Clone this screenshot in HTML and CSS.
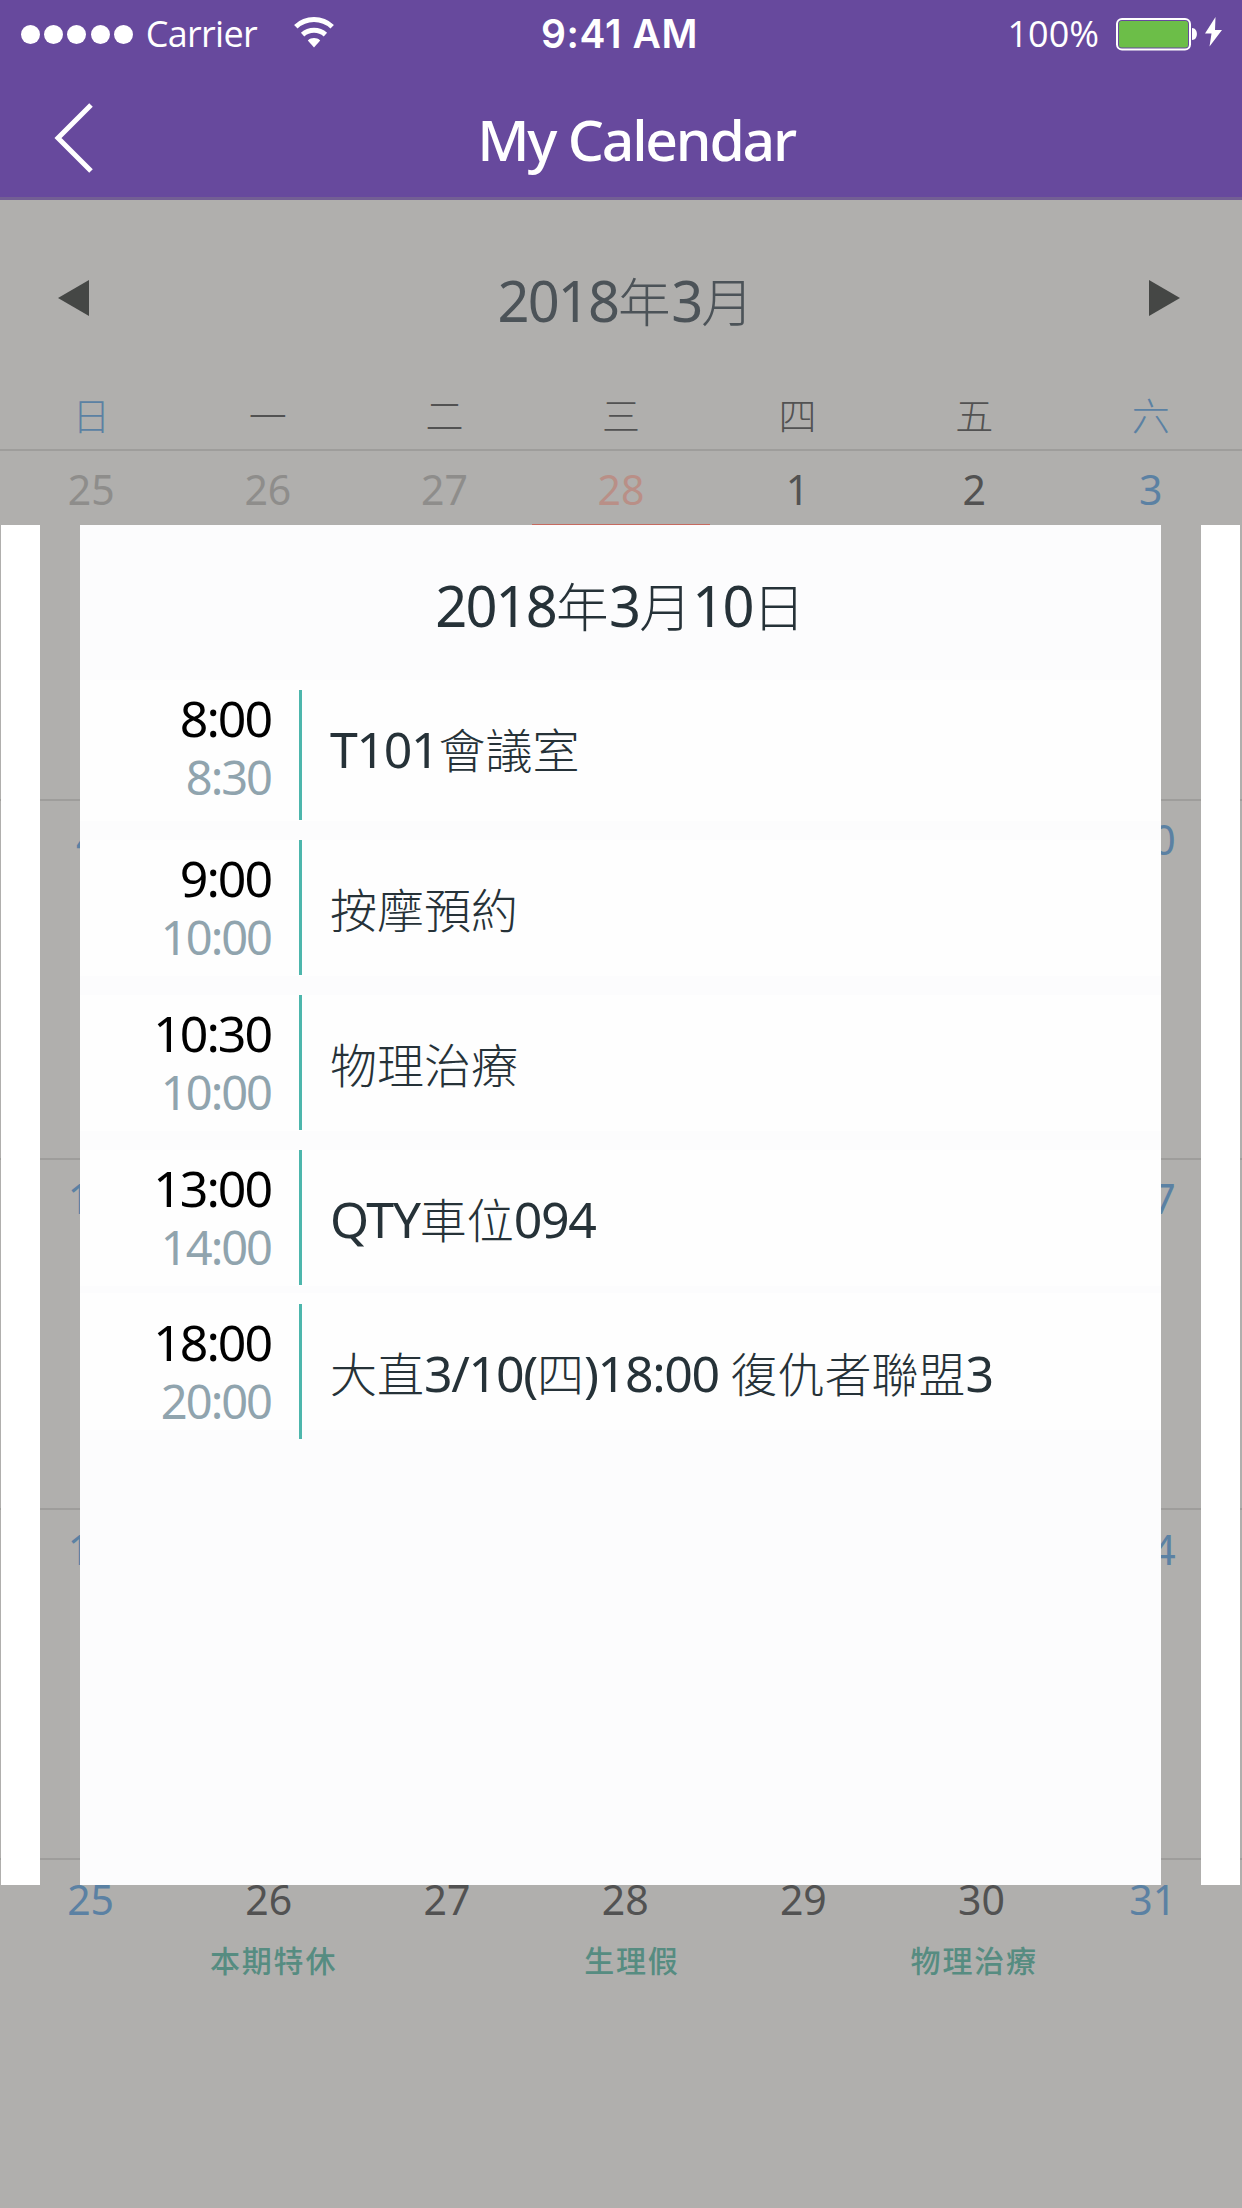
FILE: index.html
```html
<!DOCTYPE html>
<html lang="zh-Hant">
<head>
<meta charset="utf-8">
<title>My Calendar</title>
<link rel="stylesheet" href="styles.css">
</head>
<body>
<div class="screen">
  <header class="header">
    <div class="status">
      <div class="status-left">
        <span class="signal"><i></i><i></i><i></i><i></i><i></i></span>
        <span class="carrier">Carrier</span>
        <svg class="wifi" width="40" height="31" viewBox="0 0 40 31" fill="none" stroke="#fff" stroke-width="5">
          <path d="M1.8 9.8C12 .2 28 .2 38.200 9.800"/>
          <path d="M8.600 17.600C15 11.800 25 11.800 31.400 17.600"/>
          <path d="M20 30.500L13.800 23.400C17.300 20.200 22.700 20.200 26.200 23.400Z" fill="#fff" stroke="none"/>
        </svg>
      </div>
      <div class="clock">9:41 AM</div>
      <div class="status-right">
        <span class="percent">100%</span>
        <svg class="battery" width="108" height="36" viewBox="0 0 108 36">
          <rect x="2" y="3" width="73" height="30.500" rx="5" fill="none" stroke="#fff" stroke-width="2"/>
          <rect x="4" y="5" width="69" height="26.500" rx="2.500" fill="#6cbe48"/>
          <path d="M77 12c6.500 0 6.500 12 0 12z" fill="#fff"/>
          <path d="M100.500 1L90 17.500h6.500L94.500 30.500L107 14h-7z" fill="#fff"/>
        </svg>
      </div>
    </div>
    <div class="nav">
      <svg class="back" width="42" height="72" viewBox="0 0 42 72" fill="none" stroke="#fff" stroke-width="5"><path d="M39 3L6 36L39 69"/></svg>
      <h1>My Calendar</h1>
    </div>
  </header>

  <main class="calendar">
    <div class="month">
      <svg width="31" height="36" viewBox="0 0 31 36"><path d="M31 0V36L0 18Z" fill="#454745"/></svg>
      <h2>2018<span class="zh">年</span>3<span class="zh">月</span></h2>
      <svg width="31" height="36" viewBox="0 0 31 36"><path d="M0 0V36L31 18Z" fill="#454745"/></svg>
    </div>
    <div class="weekdays zh">
      <span class="weekend">日</span><span>一</span><span>二</span><span>三</span><span>四</span><span>五</span><span class="weekend">六</span>
    </div>
    <div class="week week-1">
      <span class="out">25</span><span class="out">26</span><span class="out">27</span><span class="out today">28</span><span>1</span><span>2</span><span class="weekend">3</span>
    </div>
    <div class="week week-2">
      <span class="weekend sun">4</span><span class="weekend sat">10</span>
    </div>
    <div class="week week-3">
      <span class="weekend sun">11</span><span class="weekend sat">17</span>
    </div>
    <div class="week week-4">
      <span class="weekend sun">18</span><span class="weekend sat">24</span>
    </div>
    <div class="week week-5">
      <span class="weekend">25</span><span>26</span><span>27</span><span>28</span><span>29</span><span>30</span><span class="weekend">31</span>
    </div>
    <div class="notes"><span>本期特休</span><span>生理假</span><span>物理治療</span></div>
  </main>

  <div class="pager">
    <div class="peek"></div>
    <section class="day">
      <h2>2018<span class="zh">年</span>3<span class="zh">月</span>10<span class="zh">日</span></h2>
      <article class="event event-first">
        <div class="times"><b>8:00</b><span>8:30</span></div>
        <div class="bar"></div>
        <p>T101<span class="zh">會議室</span></p>
      </article>
      <article class="event">
        <div class="times"><b>9:00</b><span>10:00</span></div>
        <div class="bar"></div>
        <p><span class="zh">按摩預約</span></p>
      </article>
      <article class="event">
        <div class="times"><b>10:30</b><span>10:00</span></div>
        <div class="bar"></div>
        <p><span class="zh">物理治療</span></p>
      </article>
      <article class="event">
        <div class="times"><b>13:00</b><span>14:00</span></div>
        <div class="bar"></div>
        <p>QTY<span class="zh">車位</span>094</p>
      </article>
      <article class="event event-last">
        <div class="times"><b>18:00</b><span>20:00</span></div>
        <div class="bar"></div>
        <p><span class="zh">大直</span>3/10(<span class="zh">四</span>)18:00 <span class="zh">復仇者聯盟</span>3</p>
      </article>
    </section>
    <div class="peek"></div>
  </div>
</div>
</body>
</html>
```
FILE: styles.css
```css
* { box-sizing: border-box; }
body {
  margin: 0;
  background: #b0afad;
  font-family: "Noto Sans", "Open Sans", sans-serif;
}
h1, h2, p { margin: 0; font-weight: 400; }
svg { display: block; flex: none; }
.screen { position: relative; width: 1242px; height: 2208px; overflow: hidden; }
.zh {
  font-family: "Noto Sans CJK TC", sans-serif;
  font-weight: 300;
  font-size: .94em;
  line-height: 0;
  letter-spacing: 0;
}

/* header */
.header {
  height: 200px;
  background: #67499d;
  border-bottom: 3px solid #735f94;
  color: #fff;
  font-family: "Open Sans", "Noto Sans", sans-serif;
}
.status {
  display: grid;
  grid-template-columns: 1fr auto 1fr;
  align-items: center;
  height: 68px;
  padding: 0 19px 0 21px;
}
.status-left, .status-right { display: flex; align-items: center; }
.status-right { justify-content: flex-end; }
.signal { display: flex; gap: 4.200px; }
.signal i { width: 19px; height: 19px; border-radius: 50%; background: #fff; }
.carrier { margin-left: 13px; font-size: 36px; letter-spacing: -.7px; line-height: 66px; }
.wifi { margin: 0 0 3px 37px; }
.clock { font: 600 39px/66px "Inter", sans-serif; letter-spacing: .6px; margin-right: 5px; }
.percent { font-size: 36px; line-height: 66px; letter-spacing: 0; margin-right: 16px; }
.nav {
  display: grid;
  grid-template-columns: 80px 1fr 80px;
  align-items: center;
  height: 129px;
  padding: 0 22px 0 52px;
}
.nav .back { margin-bottom: -11px; }
.nav h1 { text-align: center; font: 500 57px/100px "Noto Sans", sans-serif; letter-spacing: -2.200px; margin-top: 12px; }

/* month grid */
.month {
  display: flex;
  align-items: center;
  justify-content: space-between;
  height: 196px;
  padding: 0 62px 0 58px;
  color: #4c5358;
}
.month h2 { font-size: 56px; line-height: 60px; letter-spacing: -1.900px; padding: 3px 0 0 14px; }
h2 .zh { letter-spacing: .5px; }
.weekdays, .week { display: grid; grid-template-columns: repeat(7, 1fr); padding: 0 3px; text-align: center; color: #525252; }
.weekdays { height: 55px; font-size: 38px; line-height: 36px; border-bottom: 2px solid #9e9d9b; }
.weekdays .weekend, .week .weekend { color: #5b81a3; }
.week { height: 359px; font-size: 41px; line-height: 77px; border-bottom: 2px solid #9e9d9b; }
.week-1 { height: 350px; }
.week .out { color: #8e8d8b; }
.week .today { height: 75px; color: #b98f87; border-bottom: 2px solid #c56a60; margin: 0 -.500px; }
.week-3, .week-4 { height: 350px; }
.week-4 { line-height: 79px; }
.week .sun { grid-column: 1; }
.week .sat { grid-column: 7; padding-left: 3px; }
.week-2 .sun { padding-right: 7px; }
.week-5 { grid-template-columns: repeat(6, 178.200px) 1fr; height: 80px; padding: 0 7px 0 1.500px; border: 0; line-height: 79px; }
.notes { display: flex; padding-left: 210px; color: #568c81; font: 500 30px/38px "Noto Sans CJK TC", sans-serif; letter-spacing: 1.800px; }
.notes span + span { margin-left: 247px; }
.notes span + span + span { margin-left: 231px; }

/* swipeable day cards lying over the calendar */
.pager {
  position: absolute;
  left: 1px;
  top: 525px;
  width: 1239px;
  height: 1360px;
  display: grid;
  grid-template-columns: 39px 1081px 39px;
  justify-content: space-between;
}
.peek { background: #fff; }
.day { background: #fcfcfd; }
.day h2 { height: 155px; padding-top: 8px; font-size: 56px; line-height: 144px; letter-spacing: -1.900px; text-align: center; color: #263238; }
.event {
  display: grid;
  grid-template-columns: 191px 3px 1fr;
  column-gap: 28px;
  height: 136px;
  margin-bottom: 19px;
  background: #fefefe;
}
.times { text-align: right; font-size: 50px; line-height: 59px; padding: 9px 0 0; letter-spacing: -2px; color: #000; }
.times b, .times span { display: block; font-weight: 400; height: 59px; }
.times span { font-size: 47px; color: #90a4ae; }
.bar { height: 135px; background: #4db6ac; }
.event p { font-size: 50px; line-height: 138px; letter-spacing: -1.300px; color: #263238; white-space: nowrap; }
.event-first { height: 141px; }
.event-first .bar { height: 130px; margin-top: 10px; }
.event-last { height: 137px; margin-top: -12px; padding-top: 11px; }
```
